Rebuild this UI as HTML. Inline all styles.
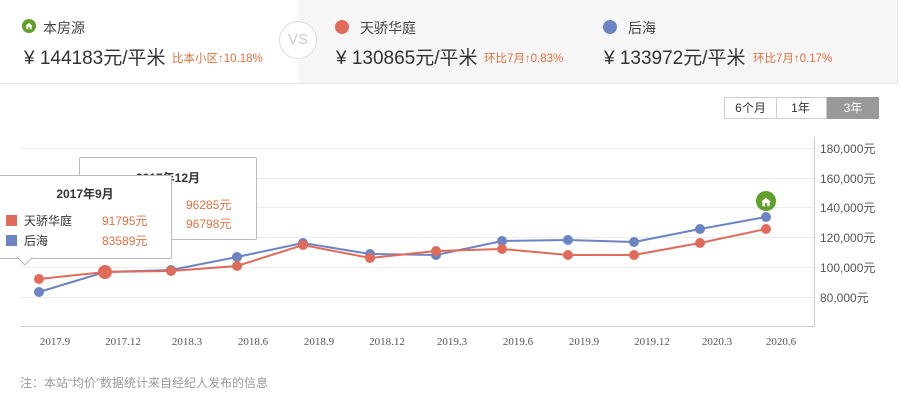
<!DOCTYPE html>
<html><head><meta charset="utf-8"><style>
body{margin:0;width:900px;height:413px;overflow:hidden;background:#fff;font-family:"Liberation Sans","Noto Sans CJK SC",sans-serif;color:#333;position:relative}
.a{position:absolute;white-space:nowrap}
.top{position:absolute;left:0;top:0;width:897px;height:83px;border-bottom:1px solid #e6e6e6;border-right:1px solid #e6e6e6}
.gray{position:absolute;left:298px;top:0;width:599px;height:83px;background:#f6f6f6}
.nm{font-size:14px;color:#444}
.pr{font-size:19px;color:#333}
.ch{font-size:11.5px;color:#e0703f}
.dot{position:absolute;width:14px;height:14px;border-radius:50%}
.tab{position:absolute;top:97px;height:20px;border:1px solid #ccc;font-size:12px;line-height:20px;text-align:center;box-sizing:content-box}
.tt{position:absolute;background:#fff;border:1px solid #bbb;border-radius:2px;font-size:12px}
.o{color:#e0703f}
</style></head><body>
<div class="top"></div><div class="gray"></div>
<svg class="a" style="left:22px;top:19px" width="14" height="14" viewBox="0 0 14 14"><circle cx="7" cy="7" r="7" fill="#5fa02a"/><path d="M3.3 7.2L7 3.8l3.7 3.4H9.7V10.3H4.3V7.2z" fill="#fff"/><rect x="6.2" y="8" width="1.6" height="2.3" fill="#5fa02a"/></svg>
<div class="a nm" style="left:43px;top:18px">本房源</div>
<div class="a pr" style="left:24px;top:43px">¥ 144183元/平米</div>
<div class="a ch" style="left:172px;top:50px">比本小区↑10.18%</div>
<div class="a" style="left:279px;top:21px;width:36px;height:36px;border:1px solid #ddd;border-radius:50%;background:#fff;color:#ccc;font-size:15px;line-height:36px;text-align:center">VS</div>
<div class="dot" style="left:335px;top:20px;background:#e06b5a"></div>
<div class="a nm" style="left:360px;top:18px">天骄华庭</div>
<div class="a pr" style="left:336px;top:43px">¥ 130865元/平米</div>
<div class="a ch" style="left:484px;top:50px">环比7月↑0.83%</div>
<div class="dot" style="left:603px;top:20px;background:#6d84c4"></div>
<div class="a nm" style="left:628px;top:18px">后海</div>
<div class="a pr" style="left:604px;top:43px">¥ 133972元/平米</div>
<div class="a ch" style="left:753px;top:50px">环比7月↑0.17%</div>
<div class="tab" style="left:724px;width:51px">6个月</div>
<div class="tab" style="left:775px;width:51px;border-left:none">1年</div>
<div class="tab" style="left:827px;width:50px;background:#999;color:#fff;border-color:#999">3年</div>
<svg class="a" style="left:0;top:0" width="900" height="413">
<g stroke="#ececec" stroke-width="1">
<line x1="20" y1="148.5" x2="814" y2="148.5"/><line x1="20" y1="178.5" x2="814" y2="178.5"/><line x1="20" y1="207.5" x2="814" y2="207.5"/><line x1="20" y1="237.5" x2="814" y2="237.5"/><line x1="20" y1="267.5" x2="814" y2="267.5"/><line x1="20" y1="297.5" x2="814" y2="297.5"/></g>
<line x1="20" y1="326.5" x2="815" y2="326.5" stroke="#ccc"/>
<line x1="814.5" y1="137" x2="814.5" y2="327" stroke="#ccc"/>
<g font-size="12" fill="#555" font-family="Liberation Sans,Noto Sans CJK SC,sans-serif">
<text x="820" y="153">180,000元</text><text x="820" y="183">160,000元</text><text x="820" y="212">140,000元</text><text x="820" y="242">120,000元</text><text x="820" y="272">100,000元</text><text x="820" y="302">80,000元</text></g>
<g font-size="11" fill="#555" font-family="Liberation Serif,serif" text-anchor="middle">
<text x="55" y="345">2017.9</text><text x="123" y="345">2017.12</text><text x="187" y="345">2018.3</text><text x="253" y="345">2018.6</text><text x="319" y="345">2018.9</text><text x="387" y="345">2018.12</text><text x="452" y="345">2019.3</text><text x="518" y="345">2019.6</text><text x="584" y="345">2019.9</text><text x="652" y="345">2019.12</text><text x="717" y="345">2020.3</text><text x="781" y="345">2020.6</text></g>
<polyline fill="none" stroke="#6d84c4" stroke-width="2" points="39,292 105,272 171,270 237,257 303,243 370,254 436,255 502,241 568,240 634,242 700,229 766,217"/>
<polyline fill="none" stroke="#e06b5a" stroke-width="2" points="39,279 105,272 171,271 237,266 303,245 370,258 436,251 502,249 568,255 634,255 700,243 766,229"/>
<g fill="#6d84c4"><circle cx="39" cy="292" r="5"/><circle cx="171" cy="270" r="5"/><circle cx="237" cy="257" r="5"/><circle cx="303" cy="243" r="5"/><circle cx="370" cy="254" r="5"/><circle cx="436" cy="255" r="5"/><circle cx="502" cy="241" r="5"/><circle cx="568" cy="240" r="5"/><circle cx="634" cy="242" r="5"/><circle cx="700" cy="229" r="5"/><circle cx="766" cy="217" r="5"/></g>
<g fill="#e06b5a"><circle cx="39" cy="279" r="5"/><circle cx="105" cy="272" r="7"/><circle cx="171" cy="271" r="5"/><circle cx="237" cy="266" r="5"/><circle cx="303" cy="245" r="5"/><circle cx="370" cy="258" r="5"/><circle cx="436" cy="251" r="5"/><circle cx="502" cy="249" r="5"/><circle cx="568" cy="255" r="5"/><circle cx="634" cy="255" r="5"/><circle cx="700" cy="243" r="5"/><circle cx="766" cy="229" r="5"/></g>
<circle cx="766" cy="201" r="10" fill="#5fa02a"/><path d="M761 202L766 197.5l5 4.5h-1.4v4.3h-7.2V202z" fill="#fff"/><rect x="765" y="203" width="2" height="3.3" fill="#5fa02a"/>
</svg>
<div class="tt" style="left:79px;top:157px;width:176px;height:81px">
<div class="a" style="left:0;width:176px;top:11px;text-align:center;font-weight:bold">2017年12月</div>
<div class="a o" style="left:106px;top:38px">96285元</div>
<div class="a o" style="left:106px;top:57px">96798元</div></div>
<div class="tt" style="left:-2px;top:175px;width:172px;height:82px">
<div class="a" style="left:0;width:172px;top:9px;text-align:center;font-weight:bold">2017年9月</div>
<div class="a" style="left:7px;top:39px;width:11px;height:11px;background:#e06b5a"></div>
<div class="a" style="left:25px;top:36px">天骄华庭</div><div class="a o" style="left:103px;top:36px">91795元</div>
<div class="a" style="left:7px;top:59px;width:11px;height:11px;background:#6d84c4"></div>
<div class="a" style="left:25px;top:56px">后海</div><div class="a o" style="left:103px;top:56px">83589元</div></div>
<svg class="a" style="left:17px;top:257px" width="18" height="9"><path d="M0 0L8 8L16 0" fill="#fff" stroke="#bbb"/><rect x="0" y="-1" width="17" height="1.5" fill="#fff"/></svg>
<div class="a" style="left:20px;top:374px;font-size:12px;color:#999">注：本站“均价”数据统计来自经纪人发布的信息</div>
</body></html>
